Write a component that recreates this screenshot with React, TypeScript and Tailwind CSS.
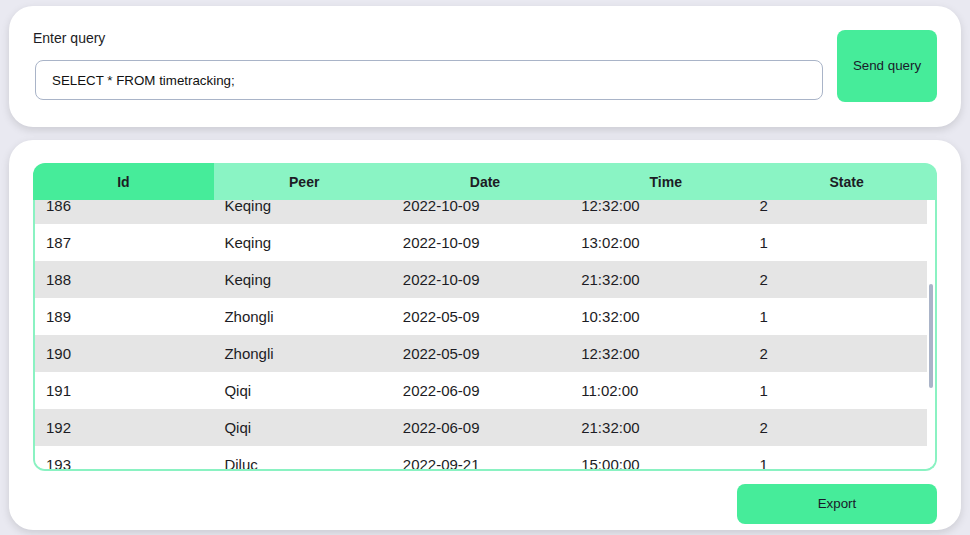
import { useLayoutEffect, useRef } from "react";

type Row = { id: number; peer: string; date: string; time: string; state: number };

const rows: Row[] = [
  { id: 180, peer: "Venti", date: "2022-08-14", time: "09:00:00", state: 1 },
  { id: 181, peer: "Venti", date: "2022-08-14", time: "17:30:00", state: 2 },
  { id: 182, peer: "Xiao", date: "2022-07-02", time: "08:15:00", state: 1 },
  { id: 183, peer: "Xiao", date: "2022-07-02", time: "16:45:00", state: 2 },
  { id: 184, peer: "Ganyu", date: "2022-09-30", time: "10:02:00", state: 1 },
  { id: 185, peer: "Keqing", date: "2022-10-09", time: "08:02:00", state: 1 },
  { id: 186, peer: "Keqing", date: "2022-10-09", time: "12:32:00", state: 2 },
  { id: 187, peer: "Keqing", date: "2022-10-09", time: "13:02:00", state: 1 },
  { id: 188, peer: "Keqing", date: "2022-10-09", time: "21:32:00", state: 2 },
  { id: 189, peer: "Zhongli", date: "2022-05-09", time: "10:32:00", state: 1 },
  { id: 190, peer: "Zhongli", date: "2022-05-09", time: "12:32:00", state: 2 },
  { id: 191, peer: "Qiqi", date: "2022-06-09", time: "11:02:00", state: 1 },
  { id: 192, peer: "Qiqi", date: "2022-06-09", time: "21:32:00", state: 2 },
  { id: 193, peer: "Diluc", date: "2022-09-21", time: "15:00:00", state: 1 },
  { id: 194, peer: "Diluc", date: "2022-09-21", time: "18:30:00", state: 2 },
  { id: 195, peer: "Jean", date: "2022-04-11", time: "09:15:00", state: 1 },
  { id: 196, peer: "Jean", date: "2022-04-11", time: "17:00:00", state: 2 },
  { id: 197, peer: "Klee", date: "2022-03-05", time: "12:00:00", state: 1 },
  { id: 198, peer: "Klee", date: "2022-03-05", time: "14:32:00", state: 2 },
  { id: 199, peer: "Eula", date: "2022-11-02", time: "10:00:00", state: 1 },
];

const headers = ["Id", "Peer", "Date", "Time", "State"];

export default function App() {
  const bodyRef = useRef<HTMLDivElement>(null);

  useLayoutEffect(() => {
    if (bodyRef.current) bodyRef.current.scrollTop = 235;
  }, []);

  return (
    <div
      className="w-[970px] h-[535px] overflow-hidden bg-[#e9e9f1] flex flex-col gap-[13px] pt-[6px] px-[9px] text-[#1c1c24]"
      style={{ fontFamily: '"Liberation Sans", Arial, sans-serif' }}
    >
      {/* Query card */}
      <div className="bg-white rounded-[24px] shadow-[0_3px_8px_rgba(0,0,0,0.13)] flex items-start gap-[14px] pl-6 pr-6 pt-6 pb-[25px]">
        <div className="flex-1 flex flex-col">
          <label className="text-[14px] leading-4 mb-[14px]">Enter query</label>
          <input
            defaultValue="SELECT * FROM timetracking;"
            className="ml-[2px] h-10 rounded-lg border border-[#a9b4c8] px-4 text-[13.33px] text-[#111] outline-none"
          />
        </div>
        <button className="w-[100px] h-[72px] rounded-lg bg-[#46ec9a] text-[13.33px] text-[#1a1a2a]">
          Send query
        </button>
      </div>

      {/* Result card */}
      <div className="bg-white rounded-[24px] shadow-[0_3px_8px_rgba(0,0,0,0.13)] h-[390px] flex flex-col pt-[23px] px-6">
        <div className="flex flex-col">
          <div className="grid grid-cols-5 h-[37px] rounded-t-xl overflow-hidden text-[14px] font-bold">
            {headers.map((h, i) => (
              <div
                key={h}
                className={
                  i === 0
                    ? "bg-[#46ec9a] flex items-center justify-center pt-[2px]"
                    : "bg-[#8af4c4] flex items-center justify-center pt-[2px]"
                }
              >
                {h}
              </div>
            ))}
          </div>
          <div className="h-[271px] flex border-2 border-t-0 border-[#8af2c2] rounded-b-xl overflow-hidden">
            <div ref={bodyRef} className="flex-1 overflow-hidden">
              {rows.map((r, i) => (
                <div
                  key={r.id}
                  className={
                    i % 2 === 0
                      ? "grid grid-cols-5 h-[37px] items-center pt-[2px] text-[15px] bg-[#e5e5e5]"
                      : "grid grid-cols-5 h-[37px] items-center pt-[2px] text-[15px] bg-white"
                  }
                >
                  <span className="pl-[11px]">{r.id}</span>
                  <span className="pl-[11px]">{r.peer}</span>
                  <span className="pl-[11px]">{r.date}</span>
                  <span className="pl-[11px]">{r.time}</span>
                  <span className="pl-[11px]">{r.state}</span>
                </div>
              ))}
            </div>
            {/* scrollbar */}
            <div className="w-2 flex flex-col items-center bg-white">
              <div className="mt-[84px] w-1 h-[104px] rounded-full bg-[#aab4c8]" />
            </div>
          </div>
        </div>
        <div className="flex justify-end mt-[13px]">
          <button className="w-[200px] h-10 rounded-lg bg-[#46ec9a] text-[13.33px] text-[#1a1a2a]">
            Export
          </button>
        </div>
      </div>
    </div>
  );
}
